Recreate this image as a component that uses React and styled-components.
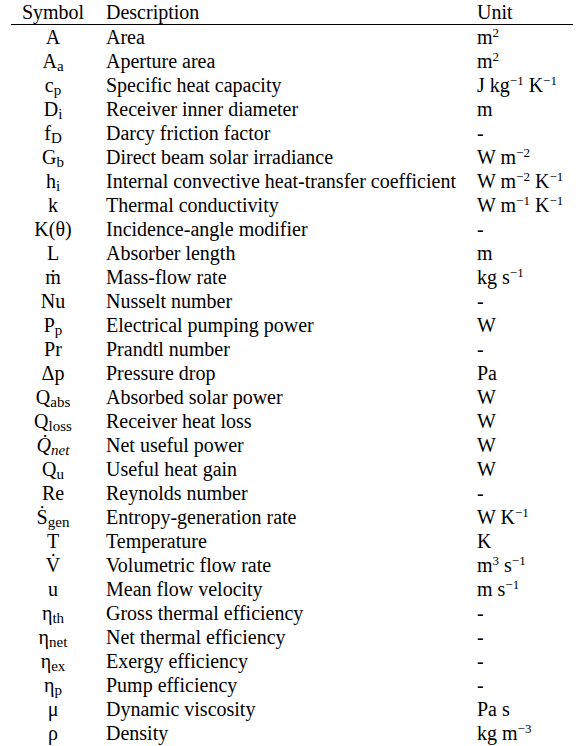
import React from 'react';
import styled, { createGlobalStyle } from 'styled-components';

const GlobalStyle = createGlobalStyle`
  html, body {
    margin: 0;
    padding: 0;
    background: #ffffff;
  }
  body {
    font-family: "Liberation Serif", "Times New Roman", serif;
    color: #000000;
  }
`;

const Table = styled.div`
  width: 562px;
  margin-left: 11px;
  display: grid;
  grid-template-columns: 84px 371px 1fr;
  font-size: 20px;
  line-height: 24px;
`;

const HeadCell = styled.div`
  height: 24px;
  border-bottom: 1px solid #000;
  text-align: ${(p) => (p.$center ? 'center' : 'left')};
  padding-left: ${(p) => (p.$center ? '0' : '11px')};
  white-space: nowrap;
`;

const SymbolCell = styled.div`
  height: 24px;
  text-align: center;
  white-space: nowrap;
`;

const TextCell = styled.div`
  height: 24px;
  padding-left: 11px;
  white-space: nowrap;
`;

const Sub = styled.span`
  font-size: 15px;
  line-height: 0;
  vertical-align: -3px;
  font-style: ${(p) => (p.$italic ? 'italic' : 'normal')};
`;

const Sup = styled.span`
  font-size: 13px;
  line-height: 0;
  vertical-align: 7px;
`;

const Italic = styled.span`
  font-style: italic;
`;

const S = ({ base, sub }) => (
  <>
    {base}
    {sub && <Sub>{sub}</Sub>}
  </>
);

const U = ({ children, p }) => (
  <>
    {children}
    <Sup>{p}</Sup>
  </>
);

const rows = [
  [<S base="A" />, 'Area', <U p="2">m</U>],
  [<S base="A" sub="a" />, 'Aperture area', <U p="2">m</U>],
  [<S base="c" sub="p" />, 'Specific heat capacity', <>J <U p="−1">kg</U> <U p="−1">K</U></>],
  [<S base="D" sub="i" />, 'Receiver inner diameter', 'm'],
  [<S base="f" sub="D" />, 'Darcy friction factor', '-'],
  [<S base="G" sub="b" />, 'Direct beam solar irradiance', <>W <U p="−2">m</U></>],
  [<S base="h" sub="i" />, 'Internal convective heat-transfer coefficient', <>W <U p="−2">m</U> <U p="−1">K</U></>],
  [<S base="k" />, 'Thermal conductivity', <>W <U p="−1">m</U> <U p="−1">K</U></>],
  [<S base="K(θ)" />, 'Incidence-angle modifier', '-'],
  [<S base="L" />, 'Absorber length', 'm'],
  [<S base="ṁ" />, 'Mass-flow rate', <>kg <U p="−1">s</U></>],
  [<S base="Nu" />, 'Nusselt number', '-'],
  [<S base="P" sub="p" />, 'Electrical pumping power', 'W'],
  [<S base="Pr" />, 'Prandtl number', '-'],
  [<S base="Δp" />, 'Pressure drop', 'Pa'],
  [<S base="Q" sub="abs" />, 'Absorbed solar power', 'W'],
  [<S base="Q" sub="loss" />, 'Receiver heat loss', 'W'],
  [<Italic>Q̇<Sub $italic>net</Sub></Italic>, 'Net useful power', 'W'],
  [<S base="Q" sub="u" />, 'Useful heat gain', 'W'],
  [<S base="Re" />, 'Reynolds number', '-'],
  [<S base="Ṡ" sub="gen" />, 'Entropy-generation rate', <>W <U p="−1">K</U></>],
  [<S base="T" />, 'Temperature', 'K'],
  [<S base="V̇" />, 'Volumetric flow rate', <><U p="3">m</U> <U p="−1">s</U></>],
  [<S base="u" />, 'Mean flow velocity', <>m <U p="−1">s</U></>],
  [<S base="η" sub="th" />, 'Gross thermal efficiency', '-'],
  [<S base="η" sub="net" />, 'Net thermal efficiency', '-'],
  [<S base="η" sub="ex" />, 'Exergy efficiency', '-'],
  [<S base="η" sub="p" />, 'Pump efficiency', '-'],
  [<S base="μ" />, 'Dynamic viscosity', 'Pa s'],
  [<S base="ρ" />, 'Density', <>kg <U p="−3">m</U></>],
];

export default function App() {
  return (
    <>
      <GlobalStyle />
      <Table>
        <HeadCell $center>Symbol</HeadCell>
        <HeadCell>Description</HeadCell>
        <HeadCell>Unit</HeadCell>
        {rows.map(([sym, desc, unit], i) => (
          <React.Fragment key={i}>
            <SymbolCell>{sym}</SymbolCell>
            <TextCell>{desc}</TextCell>
            <TextCell>{unit}</TextCell>
          </React.Fragment>
        ))}
      </Table>
    </>
  );
}
